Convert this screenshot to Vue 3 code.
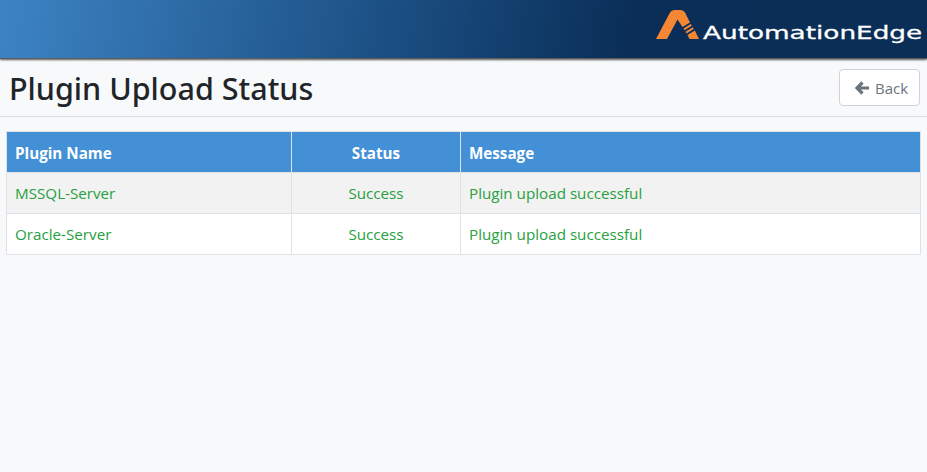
<template>
  <div class="page">
    <header class="topbar">
      <div class="brand">
        <svg class="mark" width="46" height="32" viewBox="0 0 46 32" aria-hidden="true">
          <path d="M0 30 L14 3.500 Q15.500 1 18 1 H25 Q27.500 1 29 3.500 L34 13.500 L26.500 18 L21.500 10.500 L11 30 Z" fill="#f58634" />
          <path d="M27.500 19.500 L34.800 15 L35.800 16.800 L28.500 21.300 Z M29.500 22.800 L36.800 18.300 L37.800 20.100 L30.500 24.600 Z" fill="#f58634" />
          <path d="M31.500 26 L38.800 21.500 L43 30 H33.500 Z" fill="#f58634" />
        </svg>
        <span class="brand-name">AutomationEdge</span>
      </div>
    </header>

    <section class="title-row">
      <h1>Plugin Upload Status</h1>
      <button class="back" type="button">
        <svg width="14" height="14" viewBox="0 0 14 14" aria-hidden="true">
          <path d="M7.500 1.500 L2 7 L7.500 12.500 M2.500 7 H14" fill="none" stroke="#6c757d" stroke-width="3.200" />
        </svg>
        Back
      </button>
    </section>

    <div class="table-wrap">
      <table>
        <colgroup>
          <col class="c1" /><col class="c2" /><col />
        </colgroup>
        <thead>
          <tr>
            <th>Plugin Name</th>
            <th class="center">Status</th>
            <th>Message</th>
          </tr>
        </thead>
        <tbody>
          <tr v-for="row in rows" :key="row.name">
            <td>{{ row.name }}</td>
            <td class="center">{{ row.status }}</td>
            <td>{{ row.message }}</td>
          </tr>
        </tbody>
      </table>
    </div>
  </div>
</template>

<script setup>
const rows = [
  { name: 'MSSQL-Server', status: 'Success', message: 'Plugin upload successful' },
  { name: 'Oracle-Server', status: 'Success', message: 'Plugin upload successful' },
]
</script>

<style>
html, body { margin: 0; background: #f8f9fb; }
</style>

<style scoped>
.page {
  min-height: 472px;
  background: #f8f9fb;
  font-family: "Open Sans", "Noto Sans", sans-serif;
  color: #212529;
  box-sizing: border-box;
}
.topbar {
  height: 58px;
  display: flex;
  justify-content: flex-end;
  background: linear-gradient(100deg, #3d84c4 0%, #1b4f83 42%, #0a2e57 68%, #0a2e55 100%);
  box-shadow: 0 1px 2px #555;
  border-bottom: 1px solid #5c5c5c;
}
.brand {
  display: flex;
  align-items: flex-start;
  width: 271px;
}
.mark { margin-top: 9px; margin-right: 1px; flex: none; }
.brand-name {
  display: block;
  flex: none;
  width: 153px;
  margin-top: 23px;
  color: #fff;
  font-family: "DejaVu Sans", sans-serif;
  font-size: 18px;
  line-height: 20px;
  white-space: nowrap;
  transform: scaleX(1.46);
  transform-origin: left center;
  -webkit-text-stroke: 0.3px #fff;
}
.title-row {
  display: flex;
  align-items: center;
  justify-content: space-between;
  height: 58px;
  padding: 0 7px 0 9px;
  border-bottom: 1px solid #dcdde1;
  box-sizing: border-box;
}
h1 {
  margin: 0;
  font-family: "Noto Sans", "Open Sans", sans-serif;
  font-size: 30.500px;
  font-weight: 500;
  line-height: 36px;
}
.back {
  display: flex;
  align-items: center;
  gap: 6px;
  width: 81px;
  height: 37px;
  padding: 0 0 0 15px;
  font: inherit;
  font-size: 15px;
  color: #6c757d;
  background: #fff;
  border: 1px solid #ced4da;
  border-radius: 4px;
}
.table-wrap {
  padding: 14px 6px 0 6px;
}
table {
  width: 915px;
  table-layout: fixed;
  border-collapse: collapse;
  font-size: 15.200px;
  border: 1px solid #dee2e6;
  background: #fff;
}
.c1 { width: 285px; }
.c2 { width: 169px; }
th {
  height: 39px;
  padding: 1px 8px 0;
  text-align: left;
  color: #fff;
  font-weight: 700;
  background: #4390d6;
  border-left: 1px solid #dee2e6;
  border-right: 1px solid #dee2e6;
}
td {
  height: 40px;
  padding: 0 8px;
  color: #28a040;
  border: 1px solid #dee2e6;
}
tbody tr:nth-child(odd) td { background: #f2f2f2; }
.center { text-align: center; }
</style>
